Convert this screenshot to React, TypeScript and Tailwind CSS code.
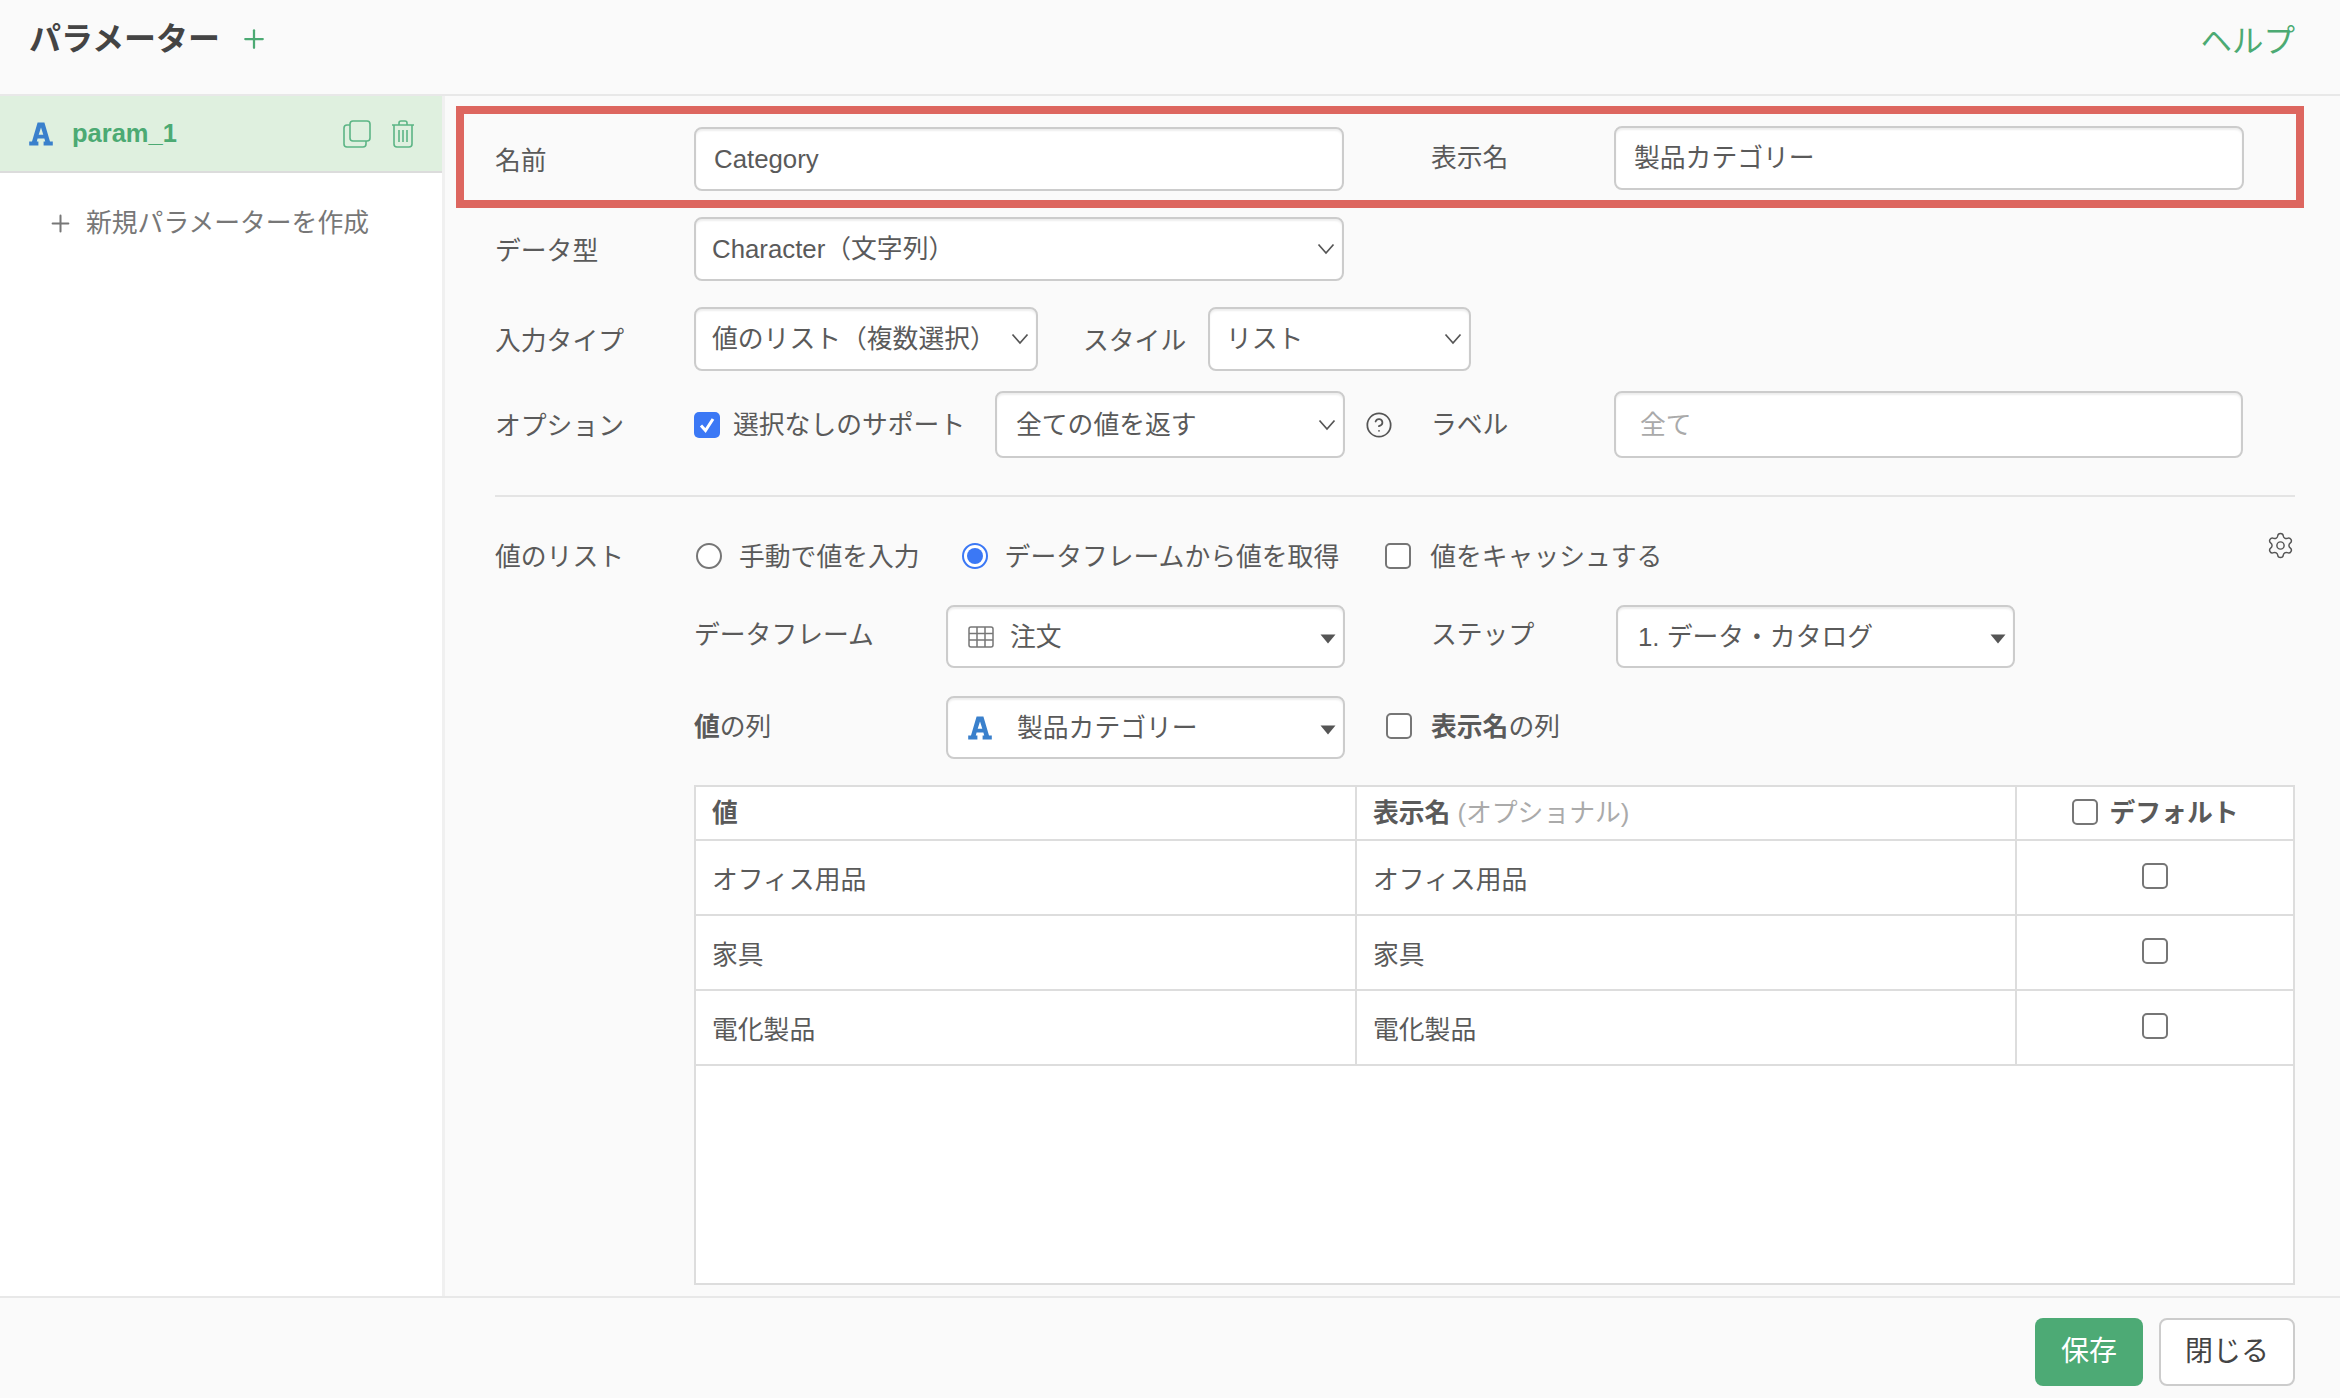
import React from "react";
import { Settings, CircleHelp, Plus } from "lucide-react";

const fieldBox =
  "h-full bg-white border-2 border-[#cccccc] rounded-[8px] shadow-[inset_0_2px_2px_rgba(0,0,0,0.07)] flex items-center text-[#5a5a5a]";

function Chevron() {
  return (
    <svg width="18" height="12" viewBox="0 0 18 12" fill="none" className="absolute right-[9px] top-1/2 -translate-y-1/2">
      <path d="M1.5 1.5 L9 10 L16.5 1.5" stroke="#555555" strokeWidth="1.7" />
    </svg>
  );
}

function Caret() {
  return (
    <svg width="16" height="10" viewBox="0 0 16 10" className="absolute right-[9px] top-1/2 -translate-y-1/2 mt-[2px]">
      <path d="M0.5 0.5 H15.5 L8 9.5 Z" fill="#555555" />
    </svg>
  );
}

function Select({ w, h, children, caret }: { w: string; h: string; children: React.ReactNode; caret?: boolean }) {
  return (
    <div className={`relative ${w} ${h} shrink-0`}>
      <div className={`${fieldBox} pl-[16px]`}>{children}</div>
      {caret ? <Caret /> : <Chevron />}
    </div>
  );
}

function Check({ className = "" }: { className?: string }) {
  return <span className={`inline-block w-[26px] h-[26px] shrink-0 rounded-[5px] border-2 border-[#767676] bg-white ${className}`} />;
}

function ColumnA() {
  return (
    <svg width="24" height="24" viewBox="0 0 24 24" className="shrink-0">
      <path
        fillRule="evenodd"
        fill="#3a80cc"
        d="M8.6 0.5 H15.4 L21 19.5 H23.8 V23.5 H14.6 V19.5 H16.2 L15.4 16.4 H8.6 L7.8 19.5 H9.4 V23.5 H0.2 V19.5 H3 Z M12 5.5 L9.7 12.8 H14.3 Z"
      />
    </svg>
  );
}

export default function App() {
  return (
    <div className="w-[2340px] h-[1398px] flex flex-col overflow-hidden bg-[#fafafa] text-[25.8px] leading-[36px] text-[#5a5a5a] font-['Liberation_Sans','Noto_Sans_CJK_JP',sans-serif]">
      {/* header */}
      <header className="h-[96px] shrink-0 border-b-2 border-[#e8e8e8] flex items-start justify-between pl-[29px] pr-[45px] pt-[20px]">
        <div className="flex items-center">
          <h1 className="text-[32px] leading-[38px] font-bold text-[#444444]">パラメーター</h1>
          <Plus className="ml-[19px] text-[#4caa73]" size={30} strokeWidth={1.8} />
        </div>
        <a className="text-[31.5px] leading-[42px] text-[#4caa73]">ヘルプ</a>
      </header>

      <div className="flex-1 flex min-h-0">
        {/* sidebar */}
        <aside className="w-[445px] shrink-0 bg-white border-r-[3px] border-[#f0f0f0]">
          <div className="h-[77px] bg-[#dff0df] border-b-2 border-[#dcdcdc] flex items-center pl-[29px] pr-[27px]">
            <ColumnA />
            <span className="ml-[19px] font-bold text-[#4caa73] leading-none text-[25.5px] mt-[1px]">param_1</span>
            <svg width="28" height="28" viewBox="0 0 28 28" fill="none" stroke="#5cb585" strokeWidth="1.6" className="ml-auto">
              <rect x="7" y="1" width="20" height="20" rx="3" />
              <path d="M7 5 H4 a3 3 0 0 0 -3 3 V24 a3 3 0 0 0 3 3 H20 a3 3 0 0 0 3 -3 V21" />
            </svg>
            <svg width="24" height="28" viewBox="0 0 24 28" fill="none" stroke="#5cb585" strokeWidth="1.6" className="ml-[20px]">
              <path d="M1 5 H23 M8 5 V3 a2 2 0 0 1 2 -2 H14 a2 2 0 0 1 2 2 V5" />
              <path d="M3 5 V24 a3 3 0 0 0 3 3 H18 a3 3 0 0 0 3 -3 V5" />
              <path d="M8 10 V22 M12 10 V22 M16 10 V22" />
            </svg>
          </div>
          <div className="flex items-center pl-[47px] mt-[32px] text-[#777777]">
            <Plus size={27} strokeWidth={1.8} />
            <span className="ml-[12px]">新規パラメーターを作成</span>
          </div>
        </aside>

        {/* form */}
        <main className="flex-1 min-w-0 flex flex-col">
          <div className="ml-[11px] mt-[10px] w-[1848px] h-[102px] border-[8px] border-[#dd665f] flex items-center pl-[31px]">
            <label className="w-[199px] shrink-0 mt-[7px]">名前</label>
            <div className="w-[650px] h-[64px] mt-[4px] shrink-0">
              <div className={`${fieldBox} pl-[18px]`}>Category</div>
            </div>
            <label className="ml-[87px] w-[183px] shrink-0 mt-[2px]">表示名</label>
            <div className="w-[630px] h-[64px] mt-[2px] shrink-0">
              <div className={`${fieldBox} pl-[18px]`}>製品カテゴリー</div>
            </div>
          </div>

          <div className="pl-[50px] pr-[45px] flex flex-col">
            <div className="flex items-center mt-[9px]">
              <label className="w-[199px] shrink-0 mt-[3px]">データ型</label>
              <Select w="w-[650px]" h="h-[64px]">Character（文字列）</Select>
            </div>

            <div className="flex items-center mt-[26px]">
              <label className="w-[199px] shrink-0 mt-[3px]">入力タイプ</label>
              <Select w="w-[344px]" h="h-[64px]">値のリスト（複数選択）</Select>
              <label className="ml-[45px] w-[125px] shrink-0 mt-[3px]">スタイル</label>
              <Select w="w-[263px]" h="h-[64px]">リスト</Select>
            </div>

            <div className="flex items-center mt-[20px]">
              <label className="w-[199px] shrink-0 mt-[3px]">オプション</label>
              <span className="w-[26px] h-[26px] shrink-0 rounded-[5px] bg-[#3b78f5] flex items-center justify-center">
                <svg width="20" height="20" viewBox="0 0 20 20" fill="none">
                  <path d="M4 10.5 L8.5 15.5 L16 4" stroke="#ffffff" strokeWidth="3" />
                </svg>
              </span>
              <span className="ml-[13px] w-[262px] shrink-0 mt-[1px]">選択なしのサポート</span>
              <Select w="w-[350px]" h="h-[67px]">
                <span className="pl-[3px]">全ての値を返す</span>
              </Select>
              <CircleHelp className="ml-[20px] shrink-0 text-[#555555]" size={28} strokeWidth={1.5} />
              <label className="ml-[38px] w-[183px] shrink-0">ラベル</label>
              <div className="w-[629px] h-[67px] shrink-0">
                <div className={`${fieldBox} pl-[24px] text-[#aaaaaa]`}>全て</div>
              </div>
            </div>

            <hr className="mt-[37px] border-0 h-[2px] bg-[#e4e4e4]" />

            <div className="flex items-center h-[26px] mt-[46px]">
              <label className="w-[201px] shrink-0 mt-[1px]">値のリスト</label>
              <span className="w-[26px] h-[26px] rounded-full border-2 border-[#767676] bg-white shrink-0" />
              <span className="ml-[17px] mt-[1px]">手動で値を入力</span>
              <span className="ml-[42px] w-[26px] h-[26px] rounded-full border-2 border-[#3b78f5] bg-white shrink-0 flex items-center justify-center">
                <span className="w-[16px] h-[16px] rounded-full bg-[#3b78f5]" />
              </span>
              <span className="ml-[17px] mt-[1px]">データフレームから値を取得</span>
              <Check className="ml-[46px]" />
              <span className="ml-[19px] mt-[1px]">値をキャッシュする</span>
              <Settings className="ml-auto -mt-[22px] text-[#555555]" size={29} strokeWidth={1.2} />
            </div>

            <div className="flex items-center mt-[36px] pl-[199px]">
              <label className="w-[252px] shrink-0 -mt-[3px]">データフレーム</label>
              <Select w="w-[399px]" h="h-[63px]" caret>
                <svg width="26" height="22" viewBox="0 0 26 22" fill="none" stroke="#777777" strokeWidth="1.5" className="ml-[4px] shrink-0">
                  <rect x="1" y="1" width="24" height="20" rx="2" />
                  <path d="M1 7.5 H25 M1 14 H25 M9 1 V21 M17 1 V21" />
                </svg>
                <span className="ml-[16px]">注文</span>
              </Select>
              <label className="ml-[86px] w-[185px] shrink-0 -mt-[3px]">ステップ</label>
              <Select w="w-[399px]" h="h-[63px]" caret>
                <span className="pl-[4px]">1. データ・カタログ</span>
              </Select>
            </div>

            <div className="flex items-center mt-[28px] pl-[199px]">
              <label className="w-[252px] shrink-0 -mt-[2px]"><b>値</b>の列</label>
              <Select w="w-[399px]" h="h-[63px]" caret>
                <span className="ml-[4px] inline-flex"><ColumnA /></span>
                <span className="ml-[25px]">製品カテゴリー</span>
              </Select>
              <Check className="ml-[41px] mt-[-3px]" />
              <span className="ml-[19px] -mt-[2px]"><b>表示名</b>の列</span>
            </div>
          </div>

          {/* table */}
          <div className="ml-[249px] mr-[45px] mt-[26px] h-[500px] border-2 border-[#dddddd] bg-white flex flex-col">
            <div className="grid grid-cols-[661px_660px_1fr] h-[54px] border-b-2 border-[#dddddd] items-stretch">
              <div className="border-r-2 border-[#dddddd] pl-[16px] flex items-center font-bold">値</div>
              <div className="border-r-2 border-[#dddddd] pl-[16px] flex items-center">
                <b>表示名</b>
                <span className="ml-[7px] text-[#aaaaaa]">(オプショナル)</span>
              </div>
              <div className="flex items-center justify-center">
                <Check className="-mt-[2px]" />
                <b className="ml-[12px]">デフォルト</b>
              </div>
            </div>
            {["オフィス用品", "家具", "電化製品"].map((t) => (
              <div key={t} className="grid grid-cols-[661px_660px_1fr] h-[75px] border-b-2 border-[#dddddd] items-stretch">
                <div className="border-r-2 border-[#dddddd] pl-[16px] flex items-center pt-[4px]">{t}</div>
                <div className="border-r-2 border-[#dddddd] pl-[16px] flex items-center pt-[4px]">{t}</div>
                <div className="flex items-center justify-center -mt-[4px]">
                  <Check />
                </div>
              </div>
            ))}
          </div>
        </main>
      </div>

      {/* footer */}
      <footer className="h-[102px] shrink-0 border-t-2 border-[#e8e8e8] flex items-start justify-end pt-[20px] pr-[45px] gap-[16px]">
        <button className="w-[108px] h-[68px] rounded-[8px] bg-[#4daa75] text-white text-[28px]">保存</button>
        <button className="w-[136px] h-[68px] rounded-[8px] bg-white border-2 border-[#cccccc] text-[#444444] text-[28px]">閉じる</button>
      </footer>
    </div>
  );
}
